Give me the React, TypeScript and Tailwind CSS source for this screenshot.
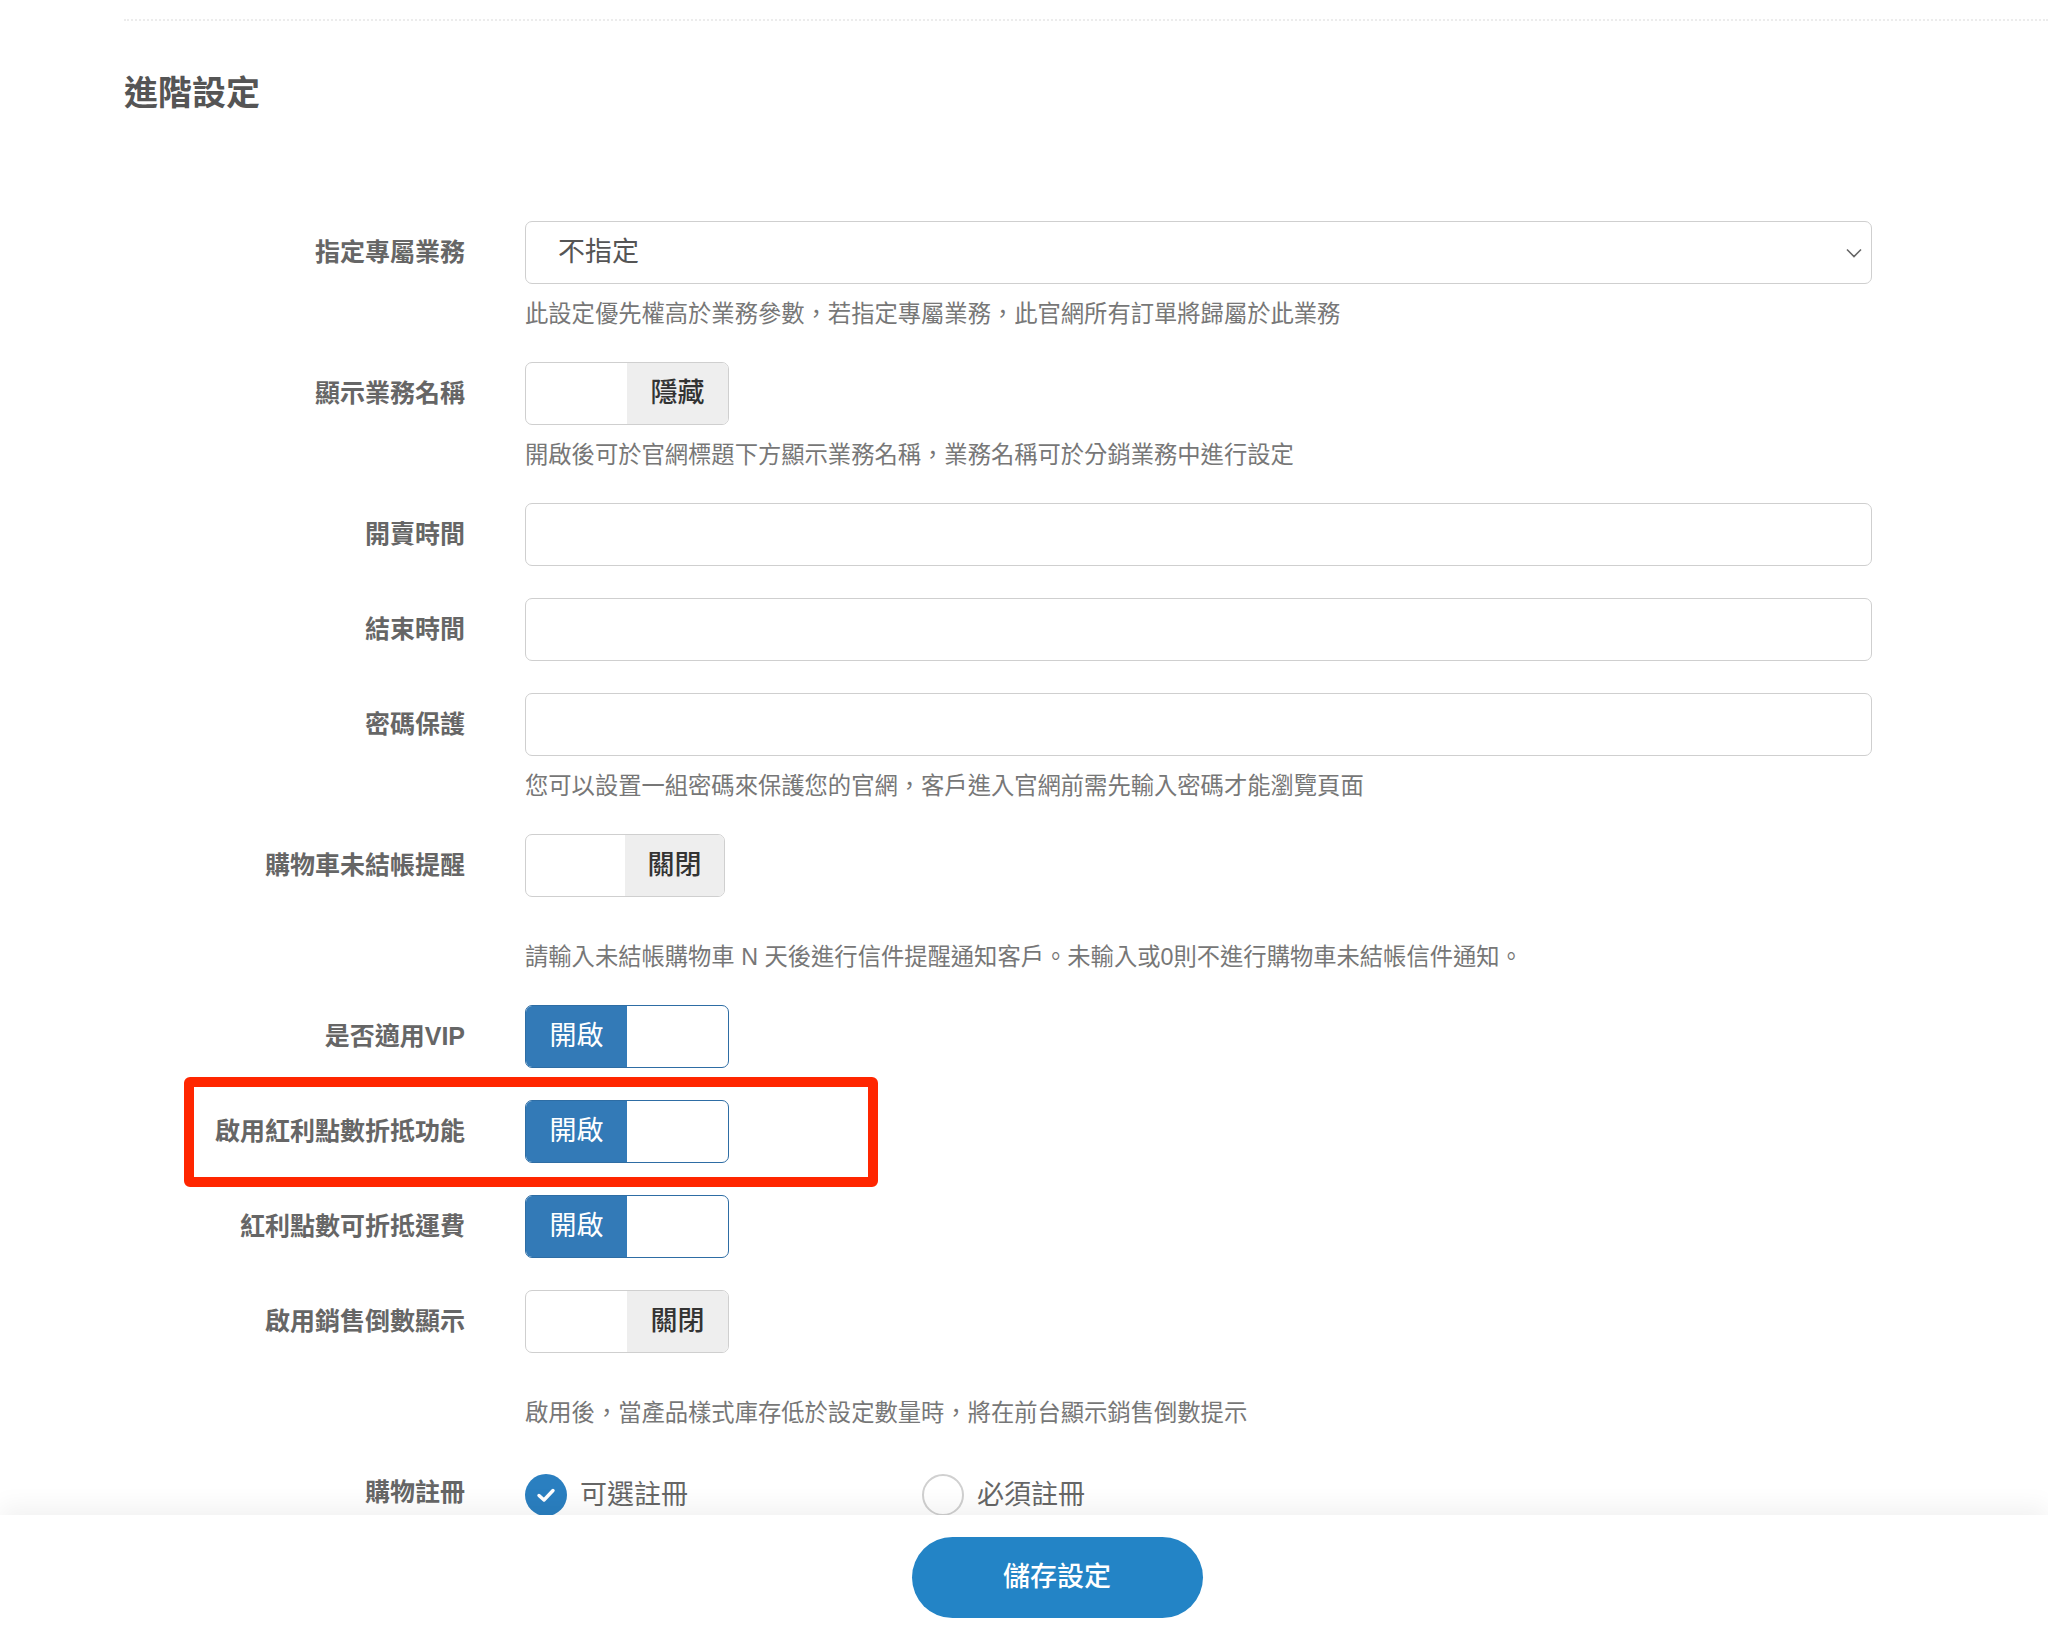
import type { ReactNode } from 'react';

const FONT = "font-['Liberation_Sans','Noto_Sans_CJK_TC',sans-serif]";

type ToggleProps = {
  on: boolean;
  text: string;
  wide?: boolean;
};

function Toggle({ on, text, wide = true }: ToggleProps) {
  const width = wide ? 'w-[204px]' : 'w-[200px]';
  if (on) {
    return (
      <div
        className={`flex h-[63px] ${width} overflow-hidden rounded-[7px] border-[1.5px] border-[#2e6da4] bg-white`}
      >
        <div className="flex w-1/2 items-center justify-center bg-[#337ab7] text-[27px] text-white">
          {text}
        </div>
        <div className="w-1/2" />
      </div>
    );
  }
  return (
    <div
      className={`flex h-[63px] ${width} overflow-hidden rounded-[7px] border-[1.5px] border-[#cfcfcf] bg-white`}
    >
      <div className="w-1/2" />
      <div className="flex w-1/2 items-center justify-center bg-[#eeeeee] text-[27px] font-medium text-[#333]">
        {text}
      </div>
    </div>
  );
}

function TextBox({ children }: { children?: ReactNode }) {
  return (
    <div className="flex h-[63px] w-full items-center rounded-[7px] border-[1.5px] border-[#cfcfcf] bg-white px-[32px] text-[27px] text-[#555]">
      {children}
    </div>
  );
}

function Help({ text, far = false }: { text: string; far?: boolean }) {
  return (
    <p className={`${far ? 'mt-[44px]' : 'mt-[14px]'} text-[23.3px] leading-[32px] text-[#777]`}>
      {text}
    </p>
  );
}

type RowProps = {
  label: string;
  children: ReactNode;
};

function Row({ label, children }: RowProps) {
  return (
    <div className="flex gap-[60px]">
      <div className="flex h-[63px] w-[341px] shrink-0 items-center justify-end text-[25px] font-bold text-[#666]">
        {label}
      </div>
      <div className="w-[1347px]">{children}</div>
    </div>
  );
}

export default function App() {
  return (
    <div className={`relative h-[1632px] w-full overflow-hidden bg-white ${FONT}`}>
      <div className="pl-[124px] pt-[19px]">
        <div className="border-t-2 border-dotted border-[#ececec]" />
        <h2 className="mt-[48px] text-[34px] font-bold leading-[48px] text-[#555]">進階設定</h2>

        <div className="mt-[104px] flex flex-col gap-[32px]">
          <Row label="指定專屬業務">
            <div className="relative">
              <TextBox>不指定</TextBox>
              <svg
                viewBox="0 0 16 10"
                className="absolute top-1/2 right-[10px] h-[10px] w-[16px] -translate-y-1/2"
                fill="none"
                stroke="#666"
                strokeWidth="1.6"
              >
                <path d="M1 1.5 L8 8.5 L15 1.5" />
              </svg>
            </div>
            <Help text="此設定優先權高於業務參數，若指定專屬業務，此官網所有訂單將歸屬於此業務" />
          </Row>

          <Row label="顯示業務名稱">
            <Toggle on={false} text="隱藏" />
            <Help text="開啟後可於官網標題下方顯示業務名稱，業務名稱可於分銷業務中進行設定" />
          </Row>

          <Row label="開賣時間">
            <TextBox />
          </Row>

          <Row label="結束時間">
            <TextBox />
          </Row>

          <Row label="密碼保護">
            <TextBox />
            <Help text="您可以設置一組密碼來保護您的官網，客戶進入官網前需先輸入密碼才能瀏覽頁面" />
          </Row>

          <Row label="購物車未結帳提醒">
            <Toggle on={false} text="關閉" wide={false} />
            <Help
              far
              text="請輸入未結帳購物車 N 天後進行信件提醒通知客戶。未輸入或0則不進行購物車未結帳信件通知。"
            />
          </Row>

          <Row label="是否適用VIP">
            <Toggle on text="開啟" />
          </Row>

          <Row label="啟用紅利點數折抵功能">
            <Toggle on text="開啟" />
          </Row>

          <Row label="紅利點數可折抵運費">
            <Toggle on text="開啟" />
          </Row>

          <Row label="啟用銷售倒數顯示">
            <Toggle on={false} text="關閉" />
            <Help far text="啟用後，當產品樣式庫存低於設定數量時，將在前台顯示銷售倒數提示" />
          </Row>

          <Row label="購物註冊">
            <div className="flex h-[68px] items-center">
              <div className="flex w-[397px] items-center gap-[13px]">
                <span className="flex h-[42px] w-[42px] items-center justify-center rounded-full bg-[#2a7fc0]">
                  <svg viewBox="0 0 24 24" className="h-[24px] w-[24px]" fill="none">
                    <path
                      d="M5 12.5 L10 17 L19 7.5"
                      stroke="white"
                      strokeWidth="3.4"
                      strokeLinecap="round"
                      strokeLinejoin="round"
                    />
                  </svg>
                </span>
                <span className="text-[27px] text-[#666]">可選註冊</span>
              </div>
              <div className="flex items-center gap-[13px]">
                <span className="h-[42px] w-[42px] rounded-full border-2 border-[#d0d0d0] bg-white" />
                <span className="text-[27px] text-[#666]">必須註冊</span>
              </div>
            </div>
          </Row>
        </div>
      </div>

      {/* annotation box */}
      <div className="pointer-events-none absolute top-[1077px] left-[184px] h-[110px] w-[694px] rounded-[6px] border-[10px] border-[#ff2600]" />

      {/* sticky footer */}
      <div className="absolute right-0 bottom-0 left-0 flex h-[117px] items-center justify-center bg-white pt-[8px] pl-[66px] shadow-[0_-10px_22px_rgba(0,0,0,0.05)]">
        <button className="h-[81px] w-[291px] rounded-full bg-[#2384c6] text-[27px] font-medium text-white">
          儲存設定
        </button>
      </div>
    </div>
  );
}
